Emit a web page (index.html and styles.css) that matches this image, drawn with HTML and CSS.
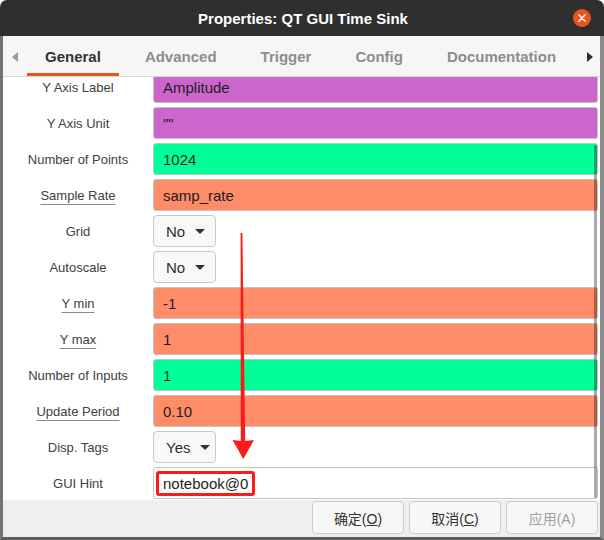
FILE: index.html
```html
<!DOCTYPE html>
<html lang="zh-CN">
<head>
    <meta charset="UTF-8">
    <title>Properties: QT GUI Time Sink</title>
    <link rel="stylesheet" href="styles.css">
</head>
<body>
    <div class="window">
        <header class="titlebar">
            <span></span>
            <span class="title">Properties: QT GUI Time Sink</span>
            <span class="close">
                <svg width="18" height="18" viewBox="0 0 18 18">
                    <circle cx="9" cy="9" r="9" fill="#e95420"/>
                    <path d="M5.8 5.8 L12.2 12.2 M12.2 5.8 L5.8 12.2" stroke="#fff" stroke-width="1.4" stroke-linecap="round"/>
                </svg>
            </span>
        </header>

        <div class="frame">
            <nav class="tabs">
                <span class="tab-arrow">
                    <svg width="6" height="10" viewBox="0 0 6 10"><path d="M6 0 L0 5 L6 10 Z" fill="#9a9a9a"/></svg>
                </span>
                <div class="tab-list">
                    <span class="tab active">General</span>
                    <span class="tab">Advanced</span>
                    <span class="tab">Trigger</span>
                    <span class="tab">Config</span>
                    <span class="tab">Documentation</span>
                </div>
                <span class="tab-arrow right">
                    <svg width="6" height="10" viewBox="0 0 6 10"><path d="M0 0 L6 5 L0 10 Z" fill="#2e2e2e"/></svg>
                </span>
            </nav>

            <div class="params">
                <div class="param-list">
                    <div class="row">
                        <span class="name">Y Axis Label</span>
                        <div class="field string">Amplitude</div>
                    </div>
                    <div class="row">
                        <span class="name">Y Axis Unit</span>
                        <div class="field string">""</div>
                    </div>
                    <div class="row">
                        <span class="name">Number of Points</span>
                        <div class="field int">1024</div>
                    </div>
                    <div class="row">
                        <span class="name"><u>Sample Rate</u></span>
                        <div class="field float">samp_rate</div>
                    </div>
                    <div class="row">
                        <span class="name">Grid</span>
                        <div class="combo">No <i class="caret"></i></div>
                    </div>
                    <div class="row">
                        <span class="name">Autoscale</span>
                        <div class="combo">No <i class="caret"></i></div>
                    </div>
                    <div class="row">
                        <span class="name"><u>Y min</u></span>
                        <div class="field float">-1</div>
                    </div>
                    <div class="row">
                        <span class="name"><u>Y max</u></span>
                        <div class="field float">1</div>
                    </div>
                    <div class="row">
                        <span class="name">Number of Inputs</span>
                        <div class="field int">1</div>
                    </div>
                    <div class="row">
                        <span class="name"><u>Update Period</u></span>
                        <div class="field float">0.10</div>
                    </div>
                    <div class="row">
                        <span class="name">Disp. Tags</span>
                        <div class="combo">Yes <i class="caret"></i></div>
                    </div>
                    <div class="row">
                        <span class="name">GUI Hint</span>
                        <div class="field plain"><span class="highlight">notebook@0</span></div>
                    </div>
                </div>
                <div class="scrollbar"></div>
            </div>

            <div class="buttons">
                <button class="btn">确定(<u>O</u>)</button>
                <button class="btn">取消(<u>C</u>)</button>
                <button class="btn disabled">应用(A)</button>
            </div>
        </div>

        <!-- red arrow drawn over the dialog -->
        <svg class="arrow" width="604" height="540" viewBox="0 0 604 540">
            <path d="M240.6 233 L242.4 233 L245.2 441 L254 440 L243.3 459 L232.5 440 L240.8 441 Z" fill="#ff1a1a"/>
        </svg>
    </div>
</body>
</html>
```

FILE: styles.css
```css
* {
    box-sizing: border-box;
}

body {
    margin: 0;
    background: #fff;
    font-family: "Liberation Sans", "Noto Sans CJK SC", sans-serif;
}

.window {
    position: relative;
    width: 604px;
    height: 540px;
    display: flex;
    flex-direction: column;
}

.titlebar {
    height: 36px;
    flex: none;
    background: #2f2f2f;
    border-radius: 7px 7px 0 0;
    display: grid;
    grid-template-columns: 1fr auto 1fr;
    align-items: center;
    color: #fff;
}

.title {
    font-size: 15px;
    font-weight: bold;
    padding-left: 2px;
}

.close {
    justify-self: end;
    margin-right: 13px;
    height: 18px;
}

.frame {
    flex: 1;
    display: flex;
    flex-direction: column;
    background: #efefef;
    border-left: 3px solid #737373;
    border-right: 4px solid #8c8c8c;
    border-bottom: 3px solid #5e5e5e;
    min-height: 0;
}

/* tabs */
.tabs {
    height: 41px;
    flex: none;
    display: flex;
    align-items: center;
    background: #f6f6f6;
    border-bottom: 1px solid #d6d6d6;
}

.tab-arrow {
    width: 24px;
    display: flex;
    justify-content: center;
    padding-top: 2px;
}

.tab-arrow.right {
    margin-left: auto;
    width: 20px;
}

.tab-list {
    display: flex;
    height: 40px;
    gap: 8px;
}

.tab {
    padding: 0 18px;
    height: 40px;
    line-height: 41px;
    font-size: 15px;
    font-weight: bold;
    color: #8d8d8d;
    border-bottom: 3px solid transparent;
}

.tab.active {
    color: #333;
    border-bottom-color: #e95420;
}

/* parameter list */
.params {
    position: relative;
    height: 423px;
    flex: none;
    background: #fff;
    overflow: hidden;
}

.param-list {
    display: flex;
    flex-direction: column;
    gap: 4px;
    margin-top: -6px;
    padding-right: 2px;
}

.row {
    display: flex;
    align-items: center;
    height: 32px;
}

.name {
    width: 150px;
    flex: none;
    text-align: center;
    font-size: 13px;
    color: #404040;
}

.name u {
    text-decoration-color: #8a8a8a;
    text-underline-offset: 4px;
}

.field {
    flex: 1;
    height: 32px;
    padding-left: 9px;
    display: flex;
    align-items: center;
    font-size: 15px;
    color: #1e1e1e;
    border: 1px solid #c4c4c4;
    border-radius: 3px;
}

.field.string {
    background: #cc66cc;
}

.field.int {
    background: #00ff99;
}

.field.float {
    background: #ff8c69;
}

.field.plain {
    background: #fff;
    padding-left: 2px;
}

.highlight {
    border: 3px solid #ff1a1a;
    border-radius: 3px;
    padding: 0 4px 0 4px;
    line-height: 19px;
}

.combo {
    width: 63px;
    height: 32px;
    display: flex;
    align-items: center;
    gap: 10px;
    padding-left: 12px;
    font-size: 15px;
    color: #2e2e2e;
    background: #f8f8f8;
    border: 1px solid #c9c9c9;
    border-radius: 4px;
}

.caret {
    width: 0;
    height: 0;
    border-left: 5px solid transparent;
    border-right: 5px solid transparent;
    border-top: 5px solid #333;
}

.scrollbar {
    position: absolute;
    right: 3px;
    top: 68px;
    bottom: 2px;
    width: 3px;
    border-radius: 2px;
    background: rgba(0, 0, 0, 0.33);
}

/* dialog buttons */
.buttons {
    flex: 1;
    display: flex;
    justify-content: flex-end;
    align-items: flex-start;
    gap: 5px;
    padding: 1px 2px 0 0;
}

.btn {
    width: 92px;
    height: 33px;
    font-family: "Liberation Sans", "Noto Sans CJK SC", sans-serif;
    font-size: 14px;
    color: #333;
    background: #f7f7f7;
    border: 1px solid #cdcdcd;
    border-radius: 4px;
}

.btn.disabled {
    color: #a0a0a0;
}

.arrow {
    position: absolute;
    left: 0;
    top: 0;
    pointer-events: none;
}
```
